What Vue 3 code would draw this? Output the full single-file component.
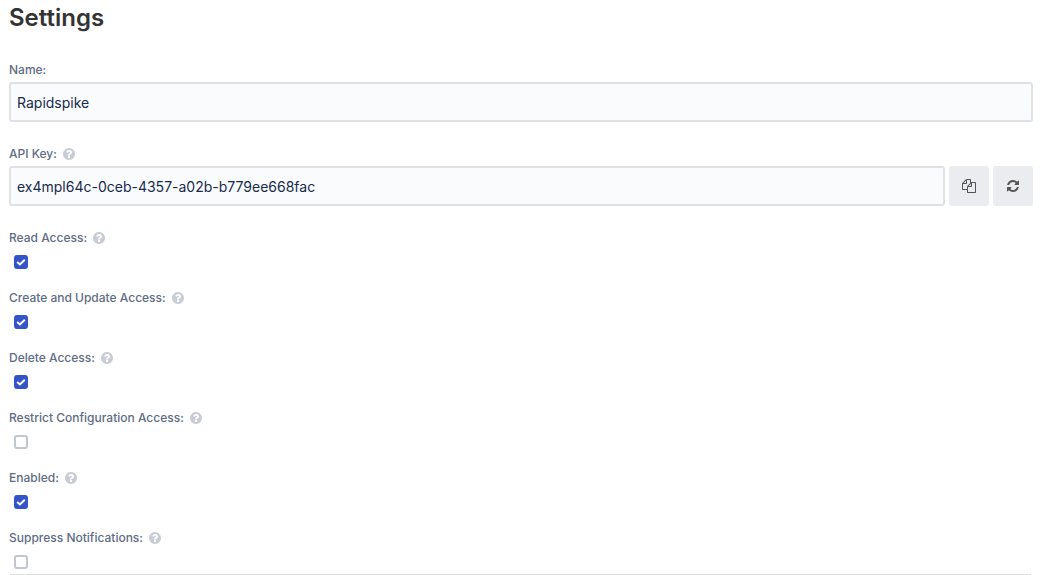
<script setup>
import { ref } from 'vue'

const name = ref('Rapidspike')
const apiKey = ref('ex4mpl64c-0ceb-4357-a02b-b779ee668fac')
const options = ref([
  { id: 'read', label: 'Read Access:', on: true },
  { id: 'write', label: 'Create and Update Access:', on: true },
  { id: 'delete', label: 'Delete Access:', on: true },
  { id: 'restrict', label: 'Restrict Configuration Access:', on: false },
  { id: 'enabled', label: 'Enabled:', on: true },
  { id: 'suppress', label: 'Suppress Notifications:', on: false },
])

const helpPath =
  'M1024 1376v-192q0-14-9-23t-23-9h-192q-14 0-23 9t-9 23v192q0 14 9 23t23 9h192q14 0 23-9t9-23zm256-672q0-88-55.5-163t-138.5-116-170-41q-243 0-371 213-15 24 8 42l132 100q7 6 19 6 16 0 25-12 53-68 86-92 34-24 86-24 48 0 85.5 26t37.5 59q0 38-20 61t-68 45q-63 28-115.5 86.5t-52.5 125.5v36q0 14 9 23t23 9h192q14 0 23-9t9-23q0-19 21.5-49.5t54.5-49.5q32-18 49-28.5t46-35 44.5-48 28-60.5 12.5-81zm384 192q0 209-103 385.5t-279.5 279.5-385.5 103-385.5-103-279.5-279.5-103-385.5 103-385.5 279.5-279.5 385.5-103 385.5 103 279.5 279.5 103 385.5z'
</script>

<template>
  <main class="settings">
    <h1>Settings</h1>
    <form @submit.prevent>
      <div class="field">
        <div class="caption"><label for="name">Name:</label></div>
        <input id="name" v-model="name" class="text" type="text" />
      </div>

      <div class="field">
        <div class="caption">
          <label for="key">API Key:</label>
          <svg class="help" viewBox="128 128 1536 1536" aria-hidden="true"><path :d="helpPath" /></svg>
        </div>
        <div class="group">
          <input id="key" v-model="apiKey" class="text" type="text" readonly />
          <button type="button" aria-label="Copy">
            <svg viewBox="0 0 1792 1792" aria-hidden="true">
              <path d="M1696 384q40 0 68 28t28 68v1216q0 40-28 68t-68 28h-960q-40 0-68-28t-28-68v-288h-544q-40 0-68-28t-28-68v-672q0-40 20-88t48-76l408-408q28-28 76-48t88-20h416q40 0 68 28t28 68v328q68-40 128-40h416zm-544 213l-299 299h299v-299zm-640-384l-299 299h299v-299zm196 647l316-316v-416h-384v416q0 40-28 68t-68 28h-416v640h512v-256q0-40 20-88t48-76zm956 804v-1152h-384v416q0 40-28 68t-68 28h-416v640h896z" />
            </svg>
          </button>
          <button type="button" aria-label="Regenerate">
            <svg viewBox="0 0 1792 1792" aria-hidden="true">
              <path d="M1639 1056q0 5-1 7-64 268-268 434.5t-478 166.5q-146 0-282.5-55t-243.5-157l-129 129q-19 19-45 19t-45-19-19-45v-448q0-26 19-45t45-19h448q26 0 45 19t19 45-19 45l-137 137q71 66 161 102t187 36q134 0 250-65t186-179q11-17 53-117 8-23 30-23h192q13 0 22.5 9.5t9.5 22.5zm25-800v448q0 26-19 45t-45 19h-448q-26 0-45-19t-19-45 19-45l138-138q-148-137-349-137-134 0-250 65t-186 179q-11 17-53 117-8 23-30 23h-199q-13 0-22.5-9.5t-9.5-22.5v-7q65-268 270-434.5t480-166.5q146 0 284 55.5t245 156.5l130-129q19-19 45-19t45 19 19 45z" />
            </svg>
          </button>
        </div>
      </div>

      <div class="options">
        <div v-for="o in options" :key="o.id" class="option">
          <div class="caption">
            <label :for="o.id">{{ o.label }}</label>
            <svg class="help" viewBox="128 128 1536 1536" aria-hidden="true"><path :d="helpPath" /></svg>
          </div>
          <div class="tick">
            <input :id="o.id" v-model="o.on" type="checkbox" />
            <svg v-if="o.on" viewBox="0 0 14 14" aria-hidden="true">
              <path d="M3.2 7 5.9 9.4 10.8 4.8" />
            </svg>
          </div>
        </div>
      </div>
      <hr />
    </form>
  </main>
</template>

<style>
body {
  margin: 0;
  background: #fff;
}
</style>

<style scoped>
.settings {
  padding: 0 29px 0 9px;
  font-family: Inter, "Liberation Sans", sans-serif;
  color: #172b4d;
}
h1 {
  margin: 0 0 24px;
  color: #333;
  font-size: 24px;
  font-weight: 600;
  line-height: 36px;
}
.field {
  margin-bottom: 22px;
}
.caption {
  display: flex;
  align-items: center;
  gap: 6px;
  height: 20px;
  margin-bottom: 2px;
  color: #5e6c84;
  font-size: 12px;
  font-weight: 500;
  line-height: 20px;
}
.help {
  width: 12px;
  height: 12px;
  fill: #c8ccd4;
}
.text {
  display: block;
  box-sizing: border-box;
  width: 100%;
  min-width: 0;
  height: 40px;
  padding: 0 6px;
  border: 2px solid #dfe1e6;
  border-radius: 3px;
  outline: 0;
  background: #fafbfc;
  color: #172b4d;
  font: 400 14px/20px Inter, "Liberation Sans", sans-serif;
}
.group {
  display: flex;
  gap: 4px;
}
.group .text {
  flex: 1;
}
button {
  display: flex;
  flex: none;
  align-items: center;
  justify-content: center;
  width: 40px;
  height: 40px;
  padding: 0;
  border: 0;
  border-radius: 3px;
  background: #ebecf0;
  cursor: pointer;
}
button svg {
  width: 14px;
  height: 14px;
  fill: #555;
}
.options {
  display: grid;
  gap: 14px;
}
.option .caption {
  margin-bottom: 0;
}
.tick {
  position: relative;
  width: 14px;
  height: 14px;
  padding: 7px 5px 5px;
}
.tick input {
  display: block;
  box-sizing: border-box;
  width: 14px;
  height: 14px;
  margin: 0;
  border: 2px solid #c1c7d0;
  border-radius: 3px;
  appearance: none;
  background: #fff;
}
.tick input:checked {
  border-color: #3455c8;
  background: #3455c8;
}
.tick svg {
  position: absolute;
  top: 7px;
  left: 5px;
  width: 14px;
  height: 14px;
  fill: none;
  stroke: #fff;
  stroke-width: 2;
  pointer-events: none;
}
hr {
  height: 1px;
  margin: 0 2px 0 1px;
  border: 0;
  background: #ddd;
}
</style>
